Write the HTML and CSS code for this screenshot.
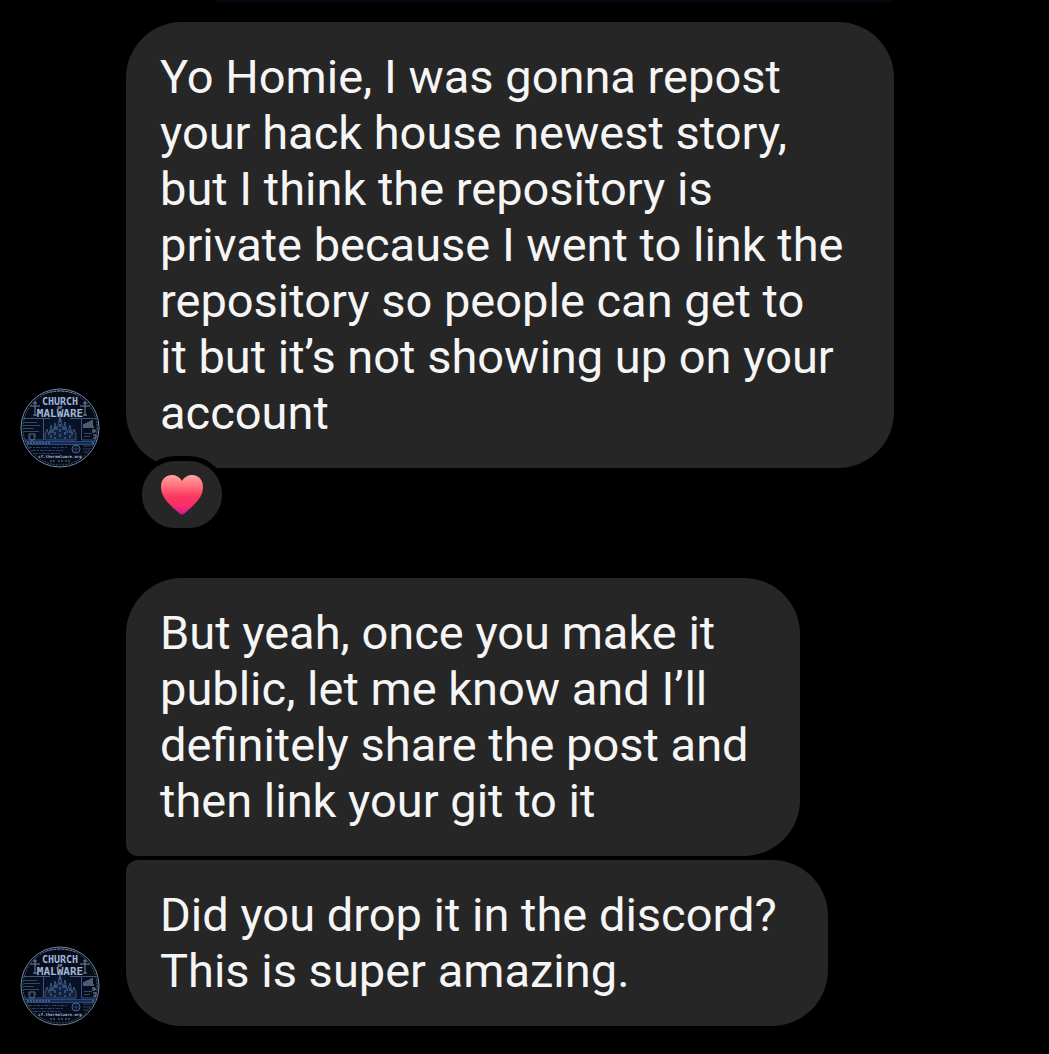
FILE: index.html
```html
<!DOCTYPE html>
<html lang="en">
<head>
  <meta charset="UTF-8" />
  <meta name="viewport" content="width=device-width, initial-scale=1.0" />
  <title>Messages</title>
  <link rel="stylesheet" href="styles.css">
</head>
<body>
  <!-- avatar artwork, shared by every message group -->
  <svg class="defs" width="0" height="0" aria-hidden="true">
    <defs>
      <radialGradient id="disc">
        <stop offset="0" stop-color="#0b1730" />
        <stop offset="1" stop-color="#050912" />
      </radialGradient>
      <clipPath id="round"><circle cx="40" cy="40" r="38" /></clipPath>
      <symbol id="church" viewBox="0 0 80 80">
        <circle cx="40" cy="40" r="39" fill="url(#disc)" stroke="#6f86a3" />
        <circle cx="40" cy="40" r="37" fill="none" stroke="#3b5272" stroke-dasharray="2 1" />
        <g clip-path="url(#round)" fill="none" stroke="#3c557c">
          <path d="M18 8Q40-2 62 8" stroke="#7d97ba" stroke-dasharray="3 1" />
          <path d="M2 30.5H23.5V52H2M61.5 52V30.5H78V52H61.5M23 30.5H30M50 30.5H61" />
          <path d="M4 34.5H17M4 37.5H20M4 40.5H14M4 43.5H19M64 45.5H72M64 48.5H70" stroke="#304869" />
          <path d="M64 38V36M66 38V35M68 38V34M70 38V33M72 38V32M63 39H74" stroke="#91aace" />
          <path d="M9 46h6v4h-1v2h-4v-2h-1zM10 48h1M13 48h1" stroke="#56709a" />
          <path d="M72 42h3v2h-3M73 47h3v3h-3" stroke="#7d95b8" />
          <path d="M3 53.5H77V56.5H3" fill="#142c59" stroke="#2b4a7c" />
          <path d="M7 55H30M72 55H76" stroke="#7089ad" stroke-dasharray="2 1" />
          <path d="M8 59.5H30M12 62.5H44M14 65.5H40M32 59.5H48" stroke="#2a4164" stroke-dasharray="4 1 2 1" />
          <circle cx="56" cy="61" r="4" stroke="#4b6791" />
          <path d="M52 61H60M56 57V65M63 58H71M63 61H70M63 64H68" stroke="#2a4164" />
        </g>
        <path d="M25 52V46L27 41L29 47L31 37L33 45L35 35L37 42L39 33L40 27L41 33L43 42L45 34L47 45L50 37L52 47L54 41L56 46V52Z" fill="#10203f" stroke="#38537f" />
        <path d="M40 31V51M35 39V51M45 39V51M31 42V51M50 42V51" stroke="#6079a0" stroke-dasharray="3 2" />
        <path d="M15 13V28M10 18H20M13 15H17M13 27H17M65 13V28M60 18H70M63 15H67M63 27H67" stroke="#71869f" fill="none" />
        <g class="seal-text">
          <text class="seal-church" x="40" y="17">CHURCH</text>
          <text class="seal-small" x="40" y="21">OF</text>
          <text class="seal-malware" x="40" y="29">MALWARE</text>
          <text class="seal-small" x="40" y="70">cf.thermalware.org</text>
        </g>
        <path d="M30 73H36M38 73H43M45 73H51" stroke="#637b9c" stroke-dasharray="2 1" />
      </symbol>
      <linearGradient id="heartFill" x1="0" y1="0" x2="0" y2="1">
        <stop offset="0" stop-color="#ffa4a6" />
        <stop offset=".25" stop-color="#ff777f" />
        <stop offset=".55" stop-color="#fb385f" />
        <stop offset=".8" stop-color="#f52d6d" />
        <stop offset="1" stop-color="#cd169b" />
      </linearGradient>
    </defs>
  </svg>

  <main class="chat">
    <div class="previous"></div>

    <div class="message has-reaction">
      <svg class="avatar" role="img" aria-label="Church of Malware"><use href="#church" /></svg>
      <div class="bubble">
        Yo Homie, I was gonna repost<br>
        your hack house newest story,<br>
        but I think the repository is<br>
        private because I went to link the<br>
        repository so people can get to<br>
        it but it’s not showing up on your<br>
        account
        <button class="reaction" aria-label="Heart reaction">
          <svg class="heart" viewBox="0 0 42 40">
            <path d="M21 6C18 1 14 0 11 0C4 0 0 5 0 12C0 23 9 30 18 38Q21 41 24 38C33 30 42 23 42 12C42 5 38 0 31 0C28 0 24 1 21 6Z" fill="url(#heartFill)" />
          </svg>
        </button>
      </div>
    </div>

    <div class="message">
      <svg class="avatar" role="img" aria-label="Church of Malware"><use href="#church" /></svg>
      <div class="stack">
        <div class="bubble first">
          But yeah, once you make it<br>
          public, let me know and I’ll<br>
          definitely share the post and<br>
          then link your git to it
        </div>
        <div class="bubble last">
          Did you drop it in the discord?<br>
          This is super amazing.
        </div>
      </div>
    </div>
  </main>
</body>
</html>
```
FILE: styles.css
```css
body {
  margin: 0;
  background: #000;
  color: #f5f5f5;
  font-family: Roboto, "Liberation Sans", sans-serif;
}

.defs {
  display: block;
}

.chat {
  padding: 0 20px 28px;
}

/* lower edge of the message above */
.previous {
  height: 2px;
  margin: 0 136px 20px 196px;
  background: #0b0312;
}

.message {
  display: flex;
  align-items: flex-end;
  gap: 26px;
}

.has-reaction {
  margin-bottom: 110px;
}

.avatar {
  flex: none;
  width: 80px;
  height: 80px;
}

.seal-text {
  fill: #a0b6d6;
  font-family: "DejaVu Sans Mono", monospace;
  font-weight: bold;
  text-anchor: middle;
}

.seal-church {
  font-size: 10px;
}

.seal-malware {
  font-size: 11px;
}

.seal-small {
  font-size: 4px;
}

.stack {
  display: flex;
  flex-direction: column;
  align-items: flex-start;
  gap: 4px;
}

.bubble {
  position: relative;
  padding: 27px 51px 27px 34px;
  border-radius: 56px;
  background: #262626;
  font-size: 47px;
  line-height: 56px;
  white-space: nowrap;
}

.first {
  border-bottom-left-radius: 12px;
}

.last {
  border-top-left-radius: 12px;
}

.reaction {
  position: absolute;
  left: 11px;
  bottom: -65px;
  display: flex;
  align-items: center;
  justify-content: center;
  box-sizing: border-box;
  width: 90px;
  height: 77px;
  padding: 0;
  border: 5px solid #000;
  border-radius: 40px;
  background: #262626;
  cursor: pointer;
}

.heart {
  width: 42px;
  height: 40px;
}
```
